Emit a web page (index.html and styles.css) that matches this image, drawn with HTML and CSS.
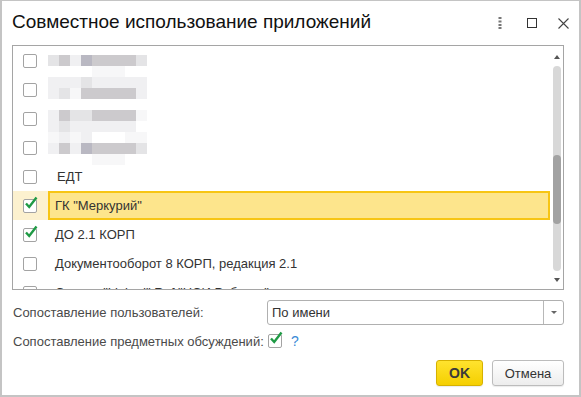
FILE: index.html
```html
<!DOCTYPE html>
<html>
<head>
    <title>Совместное использование приложений</title>
    <link rel="stylesheet" href="styles.css">
</head>
<body>
<div class="window">
    <div class="titlebar">
        <h1 class="title">Совместное использование приложений</h1>
        <div class="controls">
            <svg class="ctl" width="6" height="12" viewBox="0 0 6 12"><g fill="#777"><rect x="1.5" y="0" width="3" height="2"/><rect x="1.5" y="3.5" width="3" height="2"/><rect x="1.5" y="7" width="3" height="2"/><rect x="1.5" y="10" width="3" height="2"/></g></svg>
            <svg class="ctl" width="10" height="10" viewBox="0 0 10 10"><rect x="0.5" y="0.5" width="9" height="9" fill="none" stroke="#333"/></svg>
            <svg class="ctl" width="11" height="11" viewBox="0 0 11 11"><path d="M0.5 0.5L10.5 10.5M10.5 0.5L0.5 10.5" stroke="#444" stroke-width="1.1"/></svg>
        </div>
    </div>

    <div class="list">
        <div class="rows">
            <div class="row"><span class="cb"></span><span class="cell"></span></div>
            <div class="row"><span class="cb"></span><span class="cell"></span></div>
            <div class="row"><span class="cb"></span><span class="cell"></span></div>
            <div class="row"><span class="cb"></span><span class="cell"></span></div>
            <div class="row"><span class="cb"></span><span class="cell edt">ЕДТ</span></div>
            <div class="row selected">
                <span class="cb checked"><svg width="16" height="16" viewBox="0 0 16 16"><path d="M3 7.5L6.2 11L13.5 1.5" fill="none" stroke="#1f9a45" stroke-width="2.4"/></svg></span>
                <span class="cell">ГК "Меркурий"</span>
            </div>
            <div class="row">
                <span class="cb checked"><svg width="16" height="16" viewBox="0 0 16 16"><path d="M3 7.5L6.2 11L13.5 1.5" fill="none" stroke="#1f9a45" stroke-width="2.4"/></svg></span>
                <span class="cell">ДО 2.1 КОРП</span>
            </div>
            <div class="row"><span class="cb"></span><span class="cell">Документооборот 8 КОРП, редакция 2.1</span></div>
            <div class="row"><span class="cb"></span><span class="cell">Сервис "Linked" Ref "НСИ Ребенок"</span></div>

            <!-- blurred names -->
            <div class="mosaic">
                <i class="m2"></i><i class="m3"></i><i class="m1"></i><i class="m4"></i><i class="m3"></i><i class="m3"></i><i class="m3"></i><i class="m3"></i><i class="m2"></i>
                <i></i><i></i><i></i><i></i><i class="m0"></i><i class="m0"></i><i class="m0"></i><i></i><i></i>
                <i class="m1"></i><i class="m1"></i><i class="m1"></i><i class="m2"></i><i class="m1"></i><i class="m1"></i><i class="m1"></i><i class="m1"></i><i class="m1"></i>
                <i class="m1"></i><i class="m2"></i><i class="m0"></i><i class="m3"></i><i class="m3"></i><i class="m3"></i><i class="m3"></i><i class="m3"></i><i class="m1"></i>
                <i></i><i></i><i></i><i></i><i></i><i></i><i></i><i></i><i></i>
                <i class="m1"></i><i class="m3"></i><i class="m2"></i><i class="m2"></i><i class="m3"></i><i class="m3"></i><i class="m3"></i><i class="m3"></i><i class="m0"></i>
                <i class="m1"></i><i class="m2"></i><i class="m1"></i><i class="m1"></i><i class="m1"></i><i class="m1"></i><i class="m1"></i><i class="m1"></i><i></i>
                <i class="m0"></i><i class="m1"></i><i class="m0"></i><i class="m1"></i><i></i><i></i><i></i><i class="m0"></i><i class="m0"></i>
                <i class="m1"></i><i class="m3"></i><i class="m1"></i><i class="m4"></i><i class="m3"></i><i class="m3"></i><i class="m3"></i><i class="m3"></i><i class="m2"></i>
                <i></i><i></i><i></i><i></i><i class="m0"></i><i class="m0"></i><i class="m0"></i><i></i><i></i>
            </div>
        </div>
        <div class="scrollbar">
            <span class="arrow up"></span>
            <div class="track"><div class="thumb"></div></div>
            <span class="arrow down"></span>
        </div>
    </div>

    <div class="form">
        <label class="label">Сопоставление пользователей:</label>
        <div class="combo">
            <span class="combo-text">По имени</span>
            <span class="combo-btn"><span class="arrow down small"></span></span>
        </div>
        <label class="label">Сопоставление предметных обсуждений:</label>
        <div class="inline">
            <span class="cb checked"><svg width="16" height="16" viewBox="0 0 16 16"><path d="M3 7.5L6.2 11L13.5 1.5" fill="none" stroke="#1f9a45" stroke-width="2.4"/></svg></span>
            <span class="help">?</span>
        </div>
    </div>

    <div class="buttons">
        <button class="btn btn-ok">OK</button>
        <button class="btn">Отмена</button>
    </div>
</div>
</body>
</html>
```

FILE: styles.css
```css
body { margin: 0; font-family: "Liberation Sans", Arial, sans-serif; background: #fff; }
.window { width: 581px; height: 397px; box-sizing: border-box; border: 2px solid #c4c4c4; border-top-width: 1px; background: #fff; display: flex; flex-direction: column; }

.titlebar { height: 44px; display: flex; align-items: center; padding: 0 10px 0 10px; }
.title { margin: 0; font-size: 19px; font-weight: normal; color: #111; flex: 1; padding-bottom: 3px; }
.controls { display: flex; align-items: center; gap: 0; margin-right: 0; }
.ctl { display: block; }
.controls .ctl:nth-child(1) { margin-right: 24px; }
.controls .ctl:nth-child(2) { margin-right: 21px; }

.list { margin: 0 15px 0 10px; height: 245px; box-sizing: border-box; border: 1px solid #a5a5a5; display: flex; overflow: hidden; }
.rows { flex: 1; position: relative; overflow: hidden; }
.row { height: 29px; display: flex; align-items: center; font-size: 13px; color: #333; }
.row .cb { margin-left: 10px; margin-right: 11px; }
.cell { flex: 1; align-self: stretch; display: flex; align-items: center; padding-left: 7px; white-space: nowrap; }
.cell.edt { padding-left: 9px; }
.selected { background: #fcf1cf; }
.selected .cell { background: #fde58c; border: 2px solid #f7c514; padding-left: 5px; }

.cb { width: 14px; height: 14px; box-sizing: border-box; border: 1px solid #a3a3a3; border-radius: 2px; background: #fff; position: relative; flex: none; }
.cb svg { position: absolute; left: -1px; top: -4px; }

.mosaic { position: absolute; left: 35px; top: 9px; display: grid; grid-template-columns: repeat(9, 11px); grid-auto-rows: 11px; }
.mosaic i { display: block; }
.m0 { background: #f7f7f8; }
.m1 { background: #f0f0f2; }
.m2 { background: #e4e4e6; }
.m3 { background: #cccacd; }
.m4 { background: #b9b8c2; }

.scrollbar { width: 13px; display: flex; flex-direction: column; align-items: center; padding: 9px 0 7px; box-sizing: border-box; }
.track { flex: 1; width: 8px; border-radius: 4px; background: #d8d8d8; margin: 7px 0 7px; position: relative; }
.thumb { position: absolute; left: 0; right: 0; top: 89px; height: 69px; border-radius: 4px; background: #a2a2a2; }
.arrow { width: 0; height: 0; border-left: 3px solid transparent; border-right: 3px solid transparent; }
.arrow.up { border-bottom: 4px solid #555; }
.arrow.down { border-top: 4px solid #555; }
.arrow.small { border-top-width: 3px; border-left-width: 3px; border-right-width: 3px; border-top-color: #666; }

.form { display: grid; grid-template-columns: 254px 297px; grid-template-rows: 25px 32px; align-items: center; margin: 10px 0 0 11px; font-size: 13px; color: #4a4a4a; }
.combo { height: 25px; box-sizing: border-box; border: 1px solid #b0b0b0; border-radius: 3px; display: flex; align-items: center; color: #333; }
.combo-text { flex: 1; padding-left: 4px; }
.combo-btn { width: 19px; align-self: stretch; border-left: 1px solid #b8b8b8; display: flex; align-items: center; justify-content: center; }
.inline { display: flex; align-items: center; gap: 9px; padding-left: 1px; }
.help { color: #3a8ad6; font-size: 14px; }

.buttons { display: flex; justify-content: flex-end; gap: 9px; margin: 3px 15px 0 0; }
.btn { height: 26px; box-sizing: border-box; border: 1px solid #bcbcbc; border-radius: 3px; background: linear-gradient(#ffffff, #ededed); font-family: "Liberation Sans", Arial, sans-serif; font-size: 13px; color: #333; padding: 0 10px; width: 72px; box-shadow: 0 1px 1px rgba(0,0,0,0.08); }
.btn-ok { width: 47px; background: linear-gradient(#ffe32e, #f5cf00); border-color: #d6b100; font-size: 14px; font-weight: bold; color: #3a3a3a; }
```
